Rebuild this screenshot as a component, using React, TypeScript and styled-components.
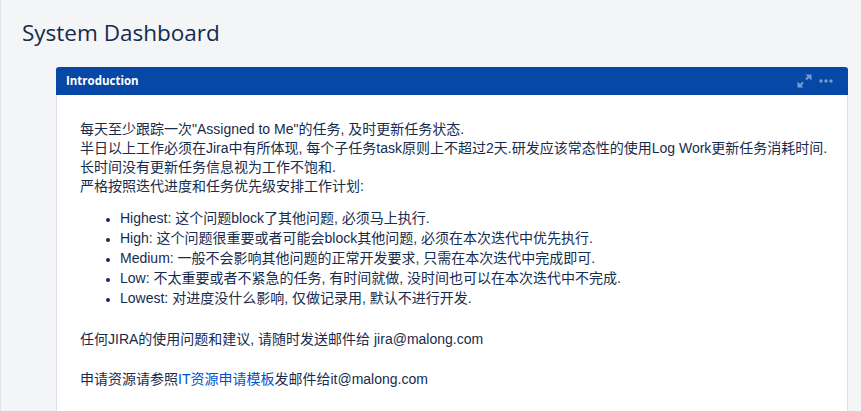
import React from "react";
import styled, { createGlobalStyle } from "styled-components";

const Global = createGlobalStyle`
  html, body { margin: 0; padding: 0; }
  body {
    background: #f4f5f7;
    font-family: "Liberation Sans", "Noto Sans CJK SC", sans-serif;
    color: #172b4d;
    overflow: hidden;
  }
`;

const Page = styled.div`
  min-height: 411px;
  border-left: 1px solid #e2e4e8;
  box-sizing: border-box;
  padding: 15px 13px 0 21px;
`;

const Title = styled.h1`
  margin: 0;
  font-family: "Open Sans", sans-serif;
  font-size: 22.5px;
  font-weight: 400;
  line-height: 36px;
  color: #172b4d;
`;

const Column = styled.div`
  margin: 16px 0 0 34px;
`;

const Gadget = styled.section`
  background: #fff;
  border: 1px solid #dfe1e6;
  border-top: none;
  border-radius: 3px 3px 0 0;
  min-height: 400px;
`;

const GadgetHeader = styled.header`
  height: 28px;
  background: #0747a6;
  border-radius: 3px 3px 0 0;
  margin: 0 -1px;
  display: flex;
  align-items: center;
  justify-content: space-between;
  padding: 0 15px 0 10px;
`;

const GadgetTitle = styled.h3`
  margin: 0;
  font-family: "Open Sans", sans-serif;
  font-size: 11.5px;
  font-weight: 700;
  color: #fff;
  line-height: 16px;
`;

const Tools = styled.div`
  display: flex;
  align-items: center;
  gap: 7px;
  color: #7a9bd2;
`;

const Body = styled.div`
  padding: 25px 6px 20px 23px;
  font-size: 14px;
`;

const Para = styled.p<{ $gap?: number }>`
  margin: 0 0 ${(p) => p.$gap ?? 0}px;
  line-height: 19px;
`;

const List = styled.ul`
  margin: 12px 0 22px;
  padding-left: 40px;
`;

const Item = styled.li`
  line-height: 20px;
  &::marker { font-size: 12px; }
`;

const Link = styled.a`
  color: #0052cc;
  text-decoration: none;
`;

const ExpandIcon = () => (
  <svg width="15" height="14" viewBox="0 0 15 14" fill="none" stroke="currentColor" strokeWidth="2">
    <path d="M9 5.5 L13 1.5" />
    <path d="M8.5 0.5 L14.5 0.5 L14.5 6.5 Z" fill="currentColor" stroke="none" />
    <path d="M6 8.5 L2 12.5" />
    <path d="M0.5 7.5 L0.5 13.5 L6.5 13.5 Z" fill="currentColor" stroke="none" />
  </svg>
);

const DotsIcon = () => (
  <svg width="14" height="4" viewBox="0 0 14 4" fill="currentColor">
    <circle cx="2" cy="2" r="1.7" />
    <circle cx="7" cy="2" r="1.7" />
    <circle cx="12" cy="2" r="1.7" />
  </svg>
);

const items = [
  "Highest: 这个问题block了其他问题, 必须马上执行.",
  "High: 这个问题很重要或者可能会block其他问题, 必须在本次迭代中优先执行.",
  "Medium: 一般不会影响其他问题的正常开发要求, 只需在本次迭代中完成即可.",
  "Low: 不太重要或者不紧急的任务, 有时间就做, 没时间也可以在本次迭代中不完成.",
  "Lowest: 对进度没什么影响, 仅做记录用, 默认不进行开发.",
];

export default function App() {
  return (
    <>
      <Global />
      <Page>
        <Title>System Dashboard</Title>
        <Column>
          <Gadget>
            <GadgetHeader>
              <GadgetTitle>Introduction</GadgetTitle>
              <Tools>
                <ExpandIcon />
                <DotsIcon />
              </Tools>
            </GadgetHeader>
            <Body>
              <Para>每天至少跟踪一次"Assigned to Me"的任务, 及时更新任务状态.</Para>
              <Para>半日以上工作必须在Jira中有所体现, 每个子任务task原则上不超过2天.研发应该常态性的使用Log Work更新任务消耗时间.</Para>
              <Para>长时间没有更新任务信息视为工作不饱和.</Para>
              <Para>严格按照迭代进度和任务优先级安排工作计划:</Para>
              <List>
                {items.map((t) => (
                  <Item key={t}>{t}</Item>
                ))}
              </List>
              <Para $gap={21}>任何JIRA的使用问题和建议, 请随时发送邮件给 jira@malong.com</Para>
              <Para>
                申请资源请参照<Link href="#">IT资源申请模板</Link>发邮件给it@malong.com
              </Para>
            </Body>
          </Gadget>
        </Column>
      </Page>
    </>
  );
}
